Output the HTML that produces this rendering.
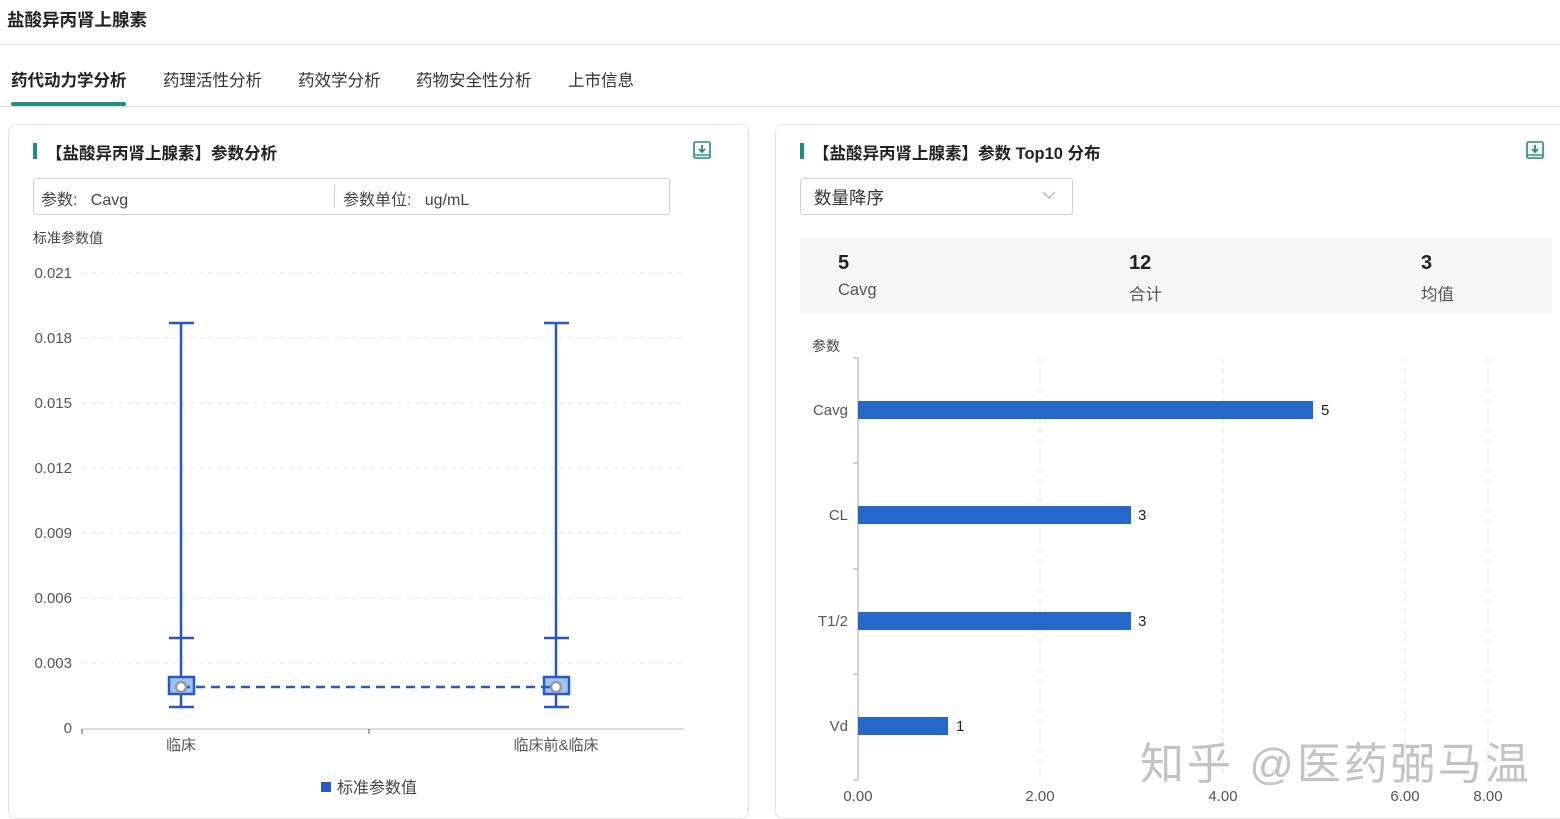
<!DOCTYPE html>
<html><head><meta charset="utf-8"><style>
*{margin:0;padding:0;box-sizing:border-box}
body{width:1560px;height:819px;overflow:hidden;background:#fff;font-family:"Liberation Sans","Noto Sans CJK SC",sans-serif;color:#333;position:relative}
.a{position:absolute;white-space:nowrap}
.panel{position:absolute;border:1px solid #e3e3e3;border-radius:8px;background:#fff}
.bar{position:absolute;width:4px;height:16px;background:#1d8f7c}
</style></head><body>
<div class="a" style="left:7px;top:7px;font-size:17.5px;font-weight:bold;color:#222">盐酸异丙肾上腺素</div>
<div class="a" style="left:0;top:44px;width:1560px;height:1px;background:#ddd"></div>
<div class="a" style="left:11px;top:67px;font-size:16.5px;font-weight:bold;color:#222">药代动力学分析</div>
<div class="a" style="left:163px;top:67px;font-size:16.5px;color:#333">药理活性分析</div>
<div class="a" style="left:298px;top:67px;font-size:16.5px;color:#333">药效学分析</div>
<div class="a" style="left:416px;top:67px;font-size:16.5px;color:#333">药物安全性分析</div>
<div class="a" style="left:568px;top:67px;font-size:16.5px;color:#333">上市信息</div>
<div class="a" style="left:0;top:106px;width:1560px;height:1px;background:#ddd"></div>
<div class="a" style="left:11px;top:102px;width:115px;height:4px;background:#1d8f7c;border-radius:2px"></div>

<div class="panel" style="left:8px;top:124px;width:741px;height:695px"></div>
<div class="panel" style="left:775px;top:124px;width:800px;height:695px"></div>

<div class="bar" style="left:33px;top:143px"></div>
<div class="a" style="left:46px;top:140px;font-size:16.5px;font-weight:bold;color:#222">【盐酸异丙肾上腺素】参数分析</div>
<svg class="a" style="left:693px;top:141px" width="18" height="18" viewBox="0 0 18 18"><rect x="1" y="1" width="16" height="16" rx="1.5" fill="none" stroke="#1d8f7c" stroke-width="1.6"/><line x1="1" y1="14" x2="17" y2="14" stroke="#1d8f7c" stroke-width="1.4"/><path d="M9 4v7M6 8l3 3 3-3" fill="none" stroke="#1d8f7c" stroke-width="1.8"/></svg>
<div class="a" style="left:33px;top:178px;width:637px;height:37px;border:1px solid #d0d0d0;border-radius:3px"></div>
<div class="a" style="left:334px;top:185px;width:1px;height:23px;background:#ccc"></div>
<div class="a" style="left:41px;top:186px;font-size:16px;color:#444">参数:&nbsp;&nbsp; Cavg</div>
<div class="a" style="left:343px;top:186px;font-size:16px;color:#444">参数单位:&nbsp;&nbsp; ug/mL</div>
<div class="a" style="left:33px;top:228px;font-size:14px;color:#444">标准参数值</div>

<svg class="a" style="left:0;top:250px" width="760" height="560">
<g font-size="15" fill="#555" text-anchor="end" font-family="Liberation Sans">
<text x="72" y="28">0.021</text><text x="72" y="93">0.018</text><text x="72" y="158">0.015</text><text x="72" y="223">0.012</text><text x="72" y="288">0.009</text><text x="72" y="353">0.006</text><text x="72" y="418">0.003</text><text x="72" y="483">0</text>
</g>
<g stroke="#e6e6e6" stroke-dasharray="5,4">
<line x1="82" y1="23" x2="682" y2="23"/><line x1="82" y1="88" x2="682" y2="88"/><line x1="82" y1="153" x2="682" y2="153"/><line x1="82" y1="218" x2="682" y2="218"/><line x1="82" y1="283" x2="682" y2="283"/><line x1="82" y1="348" x2="682" y2="348"/><line x1="82" y1="413" x2="682" y2="413"/>
</g>
<line x1="82" y1="479" x2="684" y2="479" stroke="#bbb"/>
<line x1="82" y1="479" x2="82" y2="484" stroke="#555"/><line x1="369" y1="479" x2="369" y2="484" stroke="#555"/>
<g stroke="#2758c9" stroke-width="2.5" fill="none">
<line x1="181" y1="73" x2="181" y2="458"/><line x1="169" y1="73" x2="194" y2="73"/><line x1="169" y1="388" x2="194" y2="388"/><line x1="169" y1="457" x2="194" y2="457"/>
<line x1="556" y1="73" x2="556" y2="458"/><line x1="544" y1="73" x2="569" y2="73"/><line x1="544" y1="388" x2="569" y2="388"/><line x1="544" y1="457" x2="569" y2="457"/>
<rect x="169" y="427" width="25" height="17" fill="#9fc3f5"/><rect x="544" y="427" width="25" height="17" fill="#9fc3f5"/>
<line x1="181" y1="437" x2="556" y2="437" stroke-dasharray="9,6"/>
</g>
<circle cx="181" cy="437" r="5" fill="#fff" stroke="#999" stroke-width="2.5"/><circle cx="556" cy="437" r="5" fill="#fff" stroke="#999" stroke-width="2.5"/>
<g font-size="15" fill="#555" text-anchor="middle" font-family="Liberation Sans, Noto Sans CJK SC">
<text x="181" y="500">临床</text><text x="556" y="500">临床前&amp;临床</text>
</g>
<rect x="321" y="532" width="10" height="10" fill="#2758c9"/>
<text x="337" y="543" font-size="16" fill="#444" font-family="Liberation Sans, Noto Sans CJK SC">标准参数值</text>
</svg>

<div class="bar" style="left:800px;top:143px"></div>
<div class="a" style="left:813px;top:140px;font-size:16.5px;font-weight:bold;color:#222">【盐酸异丙肾上腺素】参数 Top10 分布</div>
<svg class="a" style="left:1526px;top:141px" width="18" height="18" viewBox="0 0 18 18"><rect x="1" y="1" width="16" height="16" rx="1.5" fill="none" stroke="#1d8f7c" stroke-width="1.6"/><line x1="1" y1="14" x2="17" y2="14" stroke="#1d8f7c" stroke-width="1.4"/><path d="M9 4v7M6 8l3 3 3-3" fill="none" stroke="#1d8f7c" stroke-width="1.8"/></svg>
<div class="a" style="left:800px;top:178px;width:273px;height:37px;border:1px solid #d0d0d0;border-radius:3px"></div>
<div class="a" style="left:814px;top:185px;font-size:17.5px;color:#333">数量降序</div>
<svg class="a" style="left:1042px;top:191px" width="14" height="9"><path d="M1 1l6 6 6-6" fill="none" stroke="#aaa" stroke-width="1.2"/></svg>
<div class="a" style="left:800px;top:238px;width:752px;height:75px;background:#f6f6f6"></div>
<div class="a" style="left:838px;top:252px;font-size:20px;font-weight:bold;color:#222">5</div>
<div class="a" style="left:838px;top:281px;font-size:16.5px;color:#555">Cavg</div>
<div class="a" style="left:1129px;top:252px;font-size:20px;font-weight:bold;color:#222">12</div>
<div class="a" style="left:1129px;top:281px;font-size:16.5px;color:#555">合计</div>
<div class="a" style="left:1421px;top:252px;font-size:20px;font-weight:bold;color:#222">3</div>
<div class="a" style="left:1421px;top:281px;font-size:16.5px;color:#555">均值</div>

<svg class="a" style="left:775px;top:330px" width="785" height="489">
<text x="37" y="21" font-size="14" fill="#444" font-family="Liberation Sans, Noto Sans CJK SC">参数</text>
<g stroke="#e2e2e2" stroke-dasharray="6,4">
<line x1="265" y1="28" x2="265" y2="450"/><line x1="448" y1="28" x2="448" y2="450"/><line x1="630" y1="28" x2="630" y2="450"/><line x1="713" y1="28" x2="713" y2="450"/>
</g>
<line x1="83" y1="28" x2="83" y2="450" stroke="#aaa"/>
<g stroke="#aaa"><line x1="78" y1="28" x2="83" y2="28"/><line x1="78" y1="133" x2="83" y2="133"/><line x1="78" y1="239" x2="83" y2="239"/><line x1="78" y1="344" x2="83" y2="344"/><line x1="78" y1="450" x2="83" y2="450"/></g>
<g fill="#2468c9">
<rect x="83" y="71" width="455" height="18"/><rect x="83" y="176" width="273" height="18"/><rect x="83" y="282" width="273" height="18"/><rect x="83" y="387" width="90" height="18"/>
</g>
<g font-size="15" fill="#555" text-anchor="end" font-family="Liberation Sans">
<text x="73" y="85">Cavg</text><text x="73" y="190">CL</text><text x="73" y="296">T1/2</text><text x="73" y="401">Vd</text>
</g>
<g font-size="15" fill="#222" font-family="Liberation Sans">
<text x="546" y="85">5</text><text x="363" y="190">3</text><text x="363" y="296">3</text><text x="181" y="401">1</text>
</g>
<g font-size="15" fill="#555" text-anchor="middle" font-family="Liberation Sans">
<text x="83" y="471">0.00</text><text x="265" y="471">2.00</text><text x="448" y="471">4.00</text><text x="630" y="471">6.00</text><text x="713" y="471">8.00</text>
</g>
</svg>
<div class="a" style="left:1140px;top:728px;font-size:44px;color:rgba(175,175,175,0.75);letter-spacing:3px">知乎 @医药弼马温</div>
</body></html>
